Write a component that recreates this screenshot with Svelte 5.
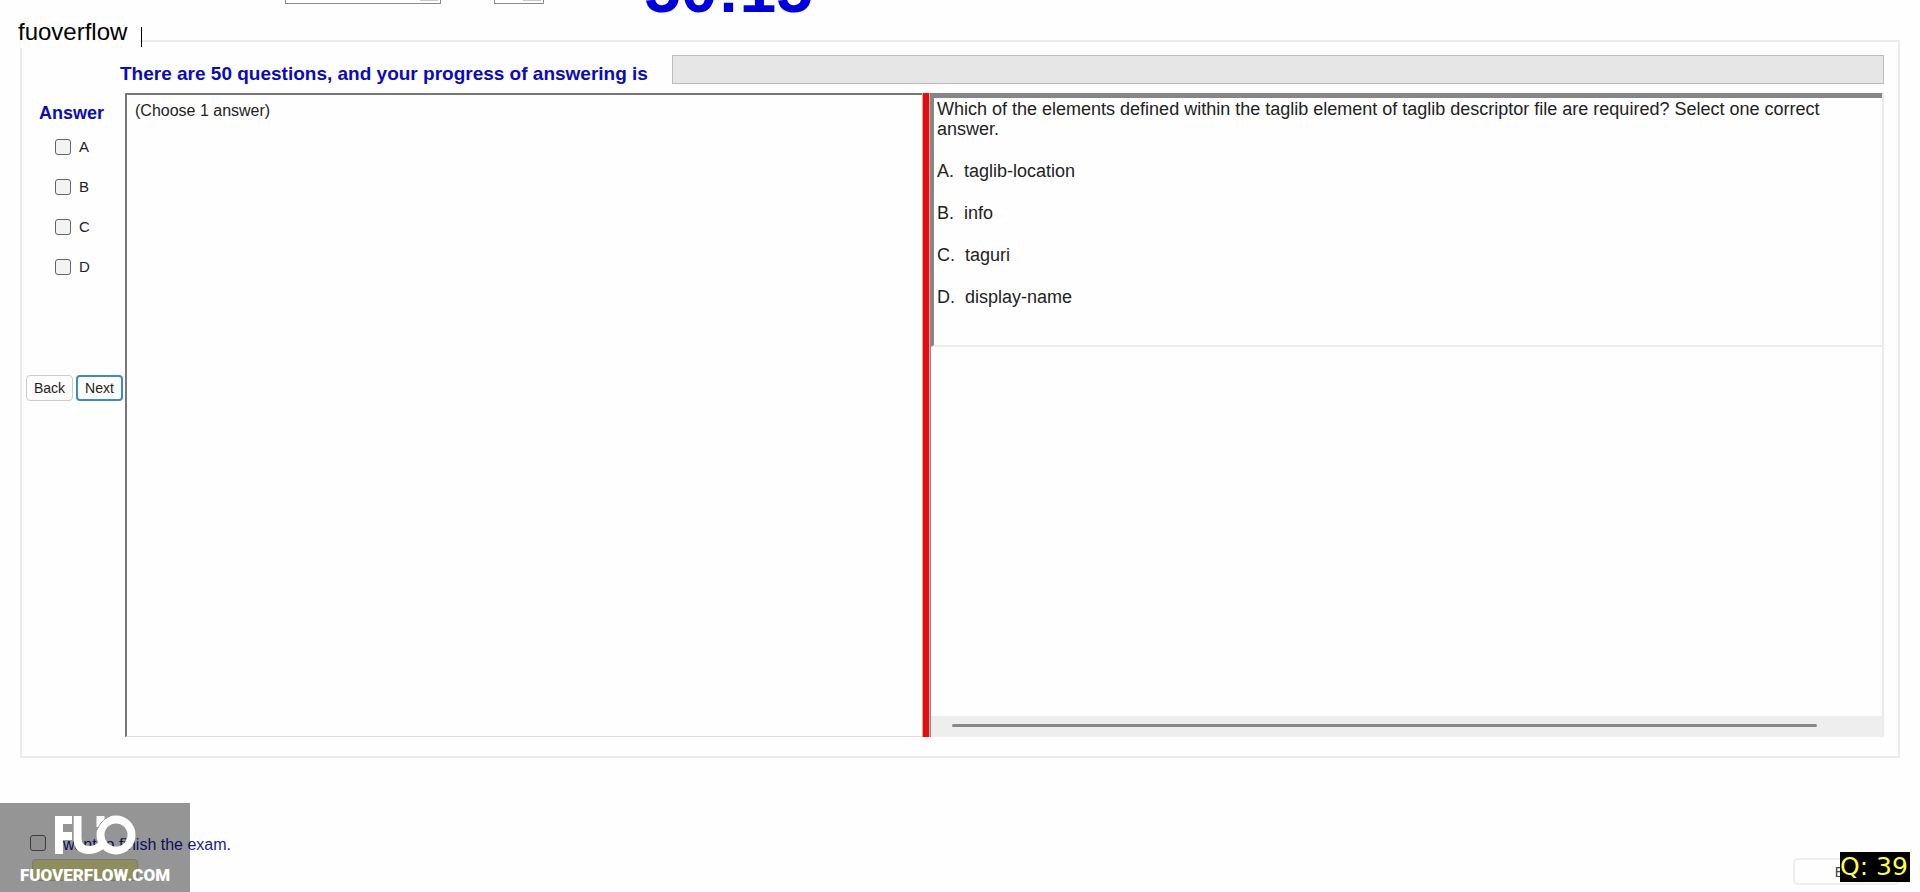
<script lang="ts">
	const choices = [
		{ key: 'A', text: 'taglib-location' },
		{ key: 'B', text: 'info' },
		{ key: 'C', text: 'taguri' },
		{ key: 'D', text: 'display-name' }
	];

	let selected = $state<string[]>([]);
	let wantsToFinish = $state(false);
</script>

<div class="exam">
	<header class="topbar">
		<select class="server" aria-label="Server"></select>
		<input class="font-size" type="text" aria-label="Font size" />
		<span class="timer">50:15</span>
	</header>

	<main class="group">
		<div class="group__title"><span>fuoverflow</span></div>

		<div class="progress">
			<span class="progress__label" id="progress-label">
				There are 50 questions, and your progress of answering is
			</span>
			<div
				class="progress__bar"
				role="progressbar"
				aria-labelledby="progress-label"
				aria-valuenow="0"
				aria-valuemin="0"
				aria-valuemax="50"
			></div>
		</div>

		<div class="columns">
			<aside class="answers">
				<h2>Answer</h2>
				<div class="answers__list">
					{#each choices as choice}
						<label>
							<input type="checkbox" value={choice.key} bind:group={selected} />
							{choice.key}
						</label>
					{/each}
				</div>
				<div class="answers__nav">
					<button>Back</button>
					<button class="primary">Next</button>
				</div>
			</aside>

			<section class="panel">(Choose 1 answer)</section>
			<div class="splitter"></div>
			<section class="question">
				<div class="question__body">
					<p>
						Which of the elements defined within the taglib element of taglib descriptor file are
						required? Select one correct answer.
					</p>
					{#each choices as choice}
						<p>{choice.key}.&nbsp; {choice.text}</p>
					{/each}
				</div>
				<div class="scrollbar"><div class="scrollbar__thumb"></div></div>
			</section>
		</div>
	</main>

	<footer class="bottom">
		<div class="finish">
			<label>
				<input type="checkbox" bind:checked={wantsToFinish} />
				I want to finish the exam.
			</label>
			<button class="finish__button" aria-label="Finish"></button>
		</div>
		<button class="exit">Exit</button>
	</footer>

	<div class="watermark">
		<svg viewBox="0 0 82 40" width="82" height="40" role="img" aria-label="FUO">
			<g fill="none" stroke="#fff" stroke-width="8">
				<path d="M5 39V5H18M5 21H18" />
				<path d="M23.5 1V23Q23.5 35 35 35Q43 35 49 29M46.5 1V12" />
				<circle cx="62" cy="20" r="15.5" />
			</g>
			<path d="M19 1V24M43 15Q47 5 56 1" fill="none" stroke="#999" />
		</svg>
		<span>FUOVERFLOW.COM</span>
	</div>
	<div class="counter">Q: 39</div>
</div>

<style>
	:global(body) {
		background: #fefefe;
	}

	.exam {
		position: relative;
		display: flex;
		flex-direction: column;
		min-height: 100vh;
		overflow: hidden;
		color: #222;
		font: 16px/20px 'Liberation Sans', Arial, sans-serif;
	}

	.exam * {
		box-sizing: border-box;
	}

	.topbar {
		display: flex;
		align-items: flex-end;
		height: 40px;
		padding-left: 285px;
		overflow: hidden;
	}

	.server,
	.font-size {
		flex: none;
		appearance: none;
		height: 28px;
		margin-bottom: 36px;
		border: 1px solid #8c8c8c;
		border-radius: 0;
		background: linear-gradient(#c8c8c8, #c8c8c8) no-repeat right 2px top 0 / 18px 24px #fff;
	}

	.server {
		width: 156px;
	}

	.font-size {
		width: 50px;
		margin-left: 53px;
	}

	.timer {
		margin: 0 0 18px 100px;
		color: #00d;
		font-size: 66px;
		font-weight: bold;
		line-height: 66px;
	}

	.group {
		position: relative;
		flex: none;
		margin: 0 20px;
		padding: 13px 14px 19px 4px;
		border: 2px solid #ebebeb;
	}

	.group__title {
		position: absolute;
		top: -22px;
		left: -4px;
		display: flex;
		gap: 14px;
		padding: 2px 0 1px;
		background: #fefefe;
		color: #000;
		font-size: 24px;
		line-height: 20px;
	}

	.group__title::after {
		content: '';
		width: 1px;
		height: 20px;
		margin-top: 5px;
		background: #000;
	}

	.progress {
		display: flex;
		gap: 24px;
		padding-left: 94px;
	}

	.progress__label {
		padding-top: 9px;
		color: #0a0abf;
		font-size: 19px;
		font-weight: bold;
		line-height: 20px;
	}

	.progress__bar {
		flex: 1;
		height: 29px;
		border: 1px solid #bcbcbc;
		background: #e6e6e6;
	}

	.columns {
		display: grid;
		grid-template-columns: 99px 797fr 8px 954fr;
		height: 644px;
		margin-top: 9px;
	}

	.answers h2 {
		margin: 10px 0 14px 13px;
		color: #0a0abf;
		font-size: 18px;
		line-height: 20px;
	}

	.answers__list {
		display: grid;
		gap: 20px;
		padding-left: 29px;
	}

	.answers label,
	.finish label {
		display: flex;
		gap: 8px;
	}

	.answers label {
		align-items: center;
		font-size: 15px;
	}

	input[type='checkbox'] {
		appearance: none;
		width: 16px;
		height: 16px;
		margin: 0;
		border: 1px solid #666;
		border-radius: 3px;
		background: #f3f3f3;
	}

	.answers__nav {
		display: flex;
		gap: 3px;
		margin-top: 98px;
	}

	.answers__nav button {
		width: 47px;
		height: 26px;
		padding: 0;
		border: 1px solid #ccc;
		border-radius: 4px;
		background: #fdfdfd;
		color: #222;
		font: 14px 'Liberation Sans', Arial, sans-serif;
	}

	.answers__nav .primary {
		border: 2px solid #3b8bc9;
	}

	.panel {
		padding: 6px 8px;
		border: solid #777;
		border-width: 2px 0 0 2px;
		border-bottom: 1px solid #ddd;
	}

	.splitter {
		border: 1px solid #f3a0a0;
		border-width: 0 1px;
		background: #e01010;
	}

	.question {
		display: flex;
		flex-direction: column;
		justify-content: space-between;
		border-right: 2px solid #ebebeb;
		border-left: 1px solid #888;
	}

	.question__body {
		height: 254px;
		padding: 1px 30px 0 3px;
		border-top: 5px solid #868686;
		border-bottom: 2px solid #ebebeb;
		border-left: 3px solid #868686;
		font-size: 18px;
		line-height: 20px;
	}

	.question__body p {
		margin: 0 0 22px;
	}

	.scrollbar {
		height: 21px;
		padding: 8px 65px 9px 21px;
		background: #eee;
	}

	.scrollbar__thumb {
		height: 3px;
		border-radius: 2px;
		background: #888;
	}

	.bottom {
		display: flex;
		justify-content: space-between;
		margin: 77px 20px 0 30px;
	}

	.finish label {
		align-items: flex-start;
		color: #1a1a9c;
	}

	.finish__button {
		display: block;
		width: 106px;
		height: 22px;
		margin: 4px 0 0 2px;
		border: 1px solid #ccc;
		border-radius: 4px;
		background: #f0f0a0;
	}

	.exit {
		width: 107px;
		height: 27px;
		margin-top: 23px;
		border: 2px solid #eee;
		border-radius: 5px;
		background: #fefefe;
		color: #444;
		font: 14px 'Liberation Sans', Arial, sans-serif;
	}

	.watermark {
		position: absolute;
		bottom: 0;
		left: 0;
		display: flex;
		flex-direction: column;
		align-items: center;
		gap: 9px;
		width: 190px;
		height: 89px;
		padding-top: 12px;
		background: rgb(0 0 0 / 41%);
		color: #fff;
		font: 900 17px/22px Impact, Roboto, sans-serif;
	}

	.counter {
		position: absolute;
		right: 10px;
		bottom: 10px;
		width: 70px;
		background: #000;
		color: #ffff40;
		font: 25px/30px 'DejaVu Sans', sans-serif;
		white-space: nowrap;
	}
</style>
